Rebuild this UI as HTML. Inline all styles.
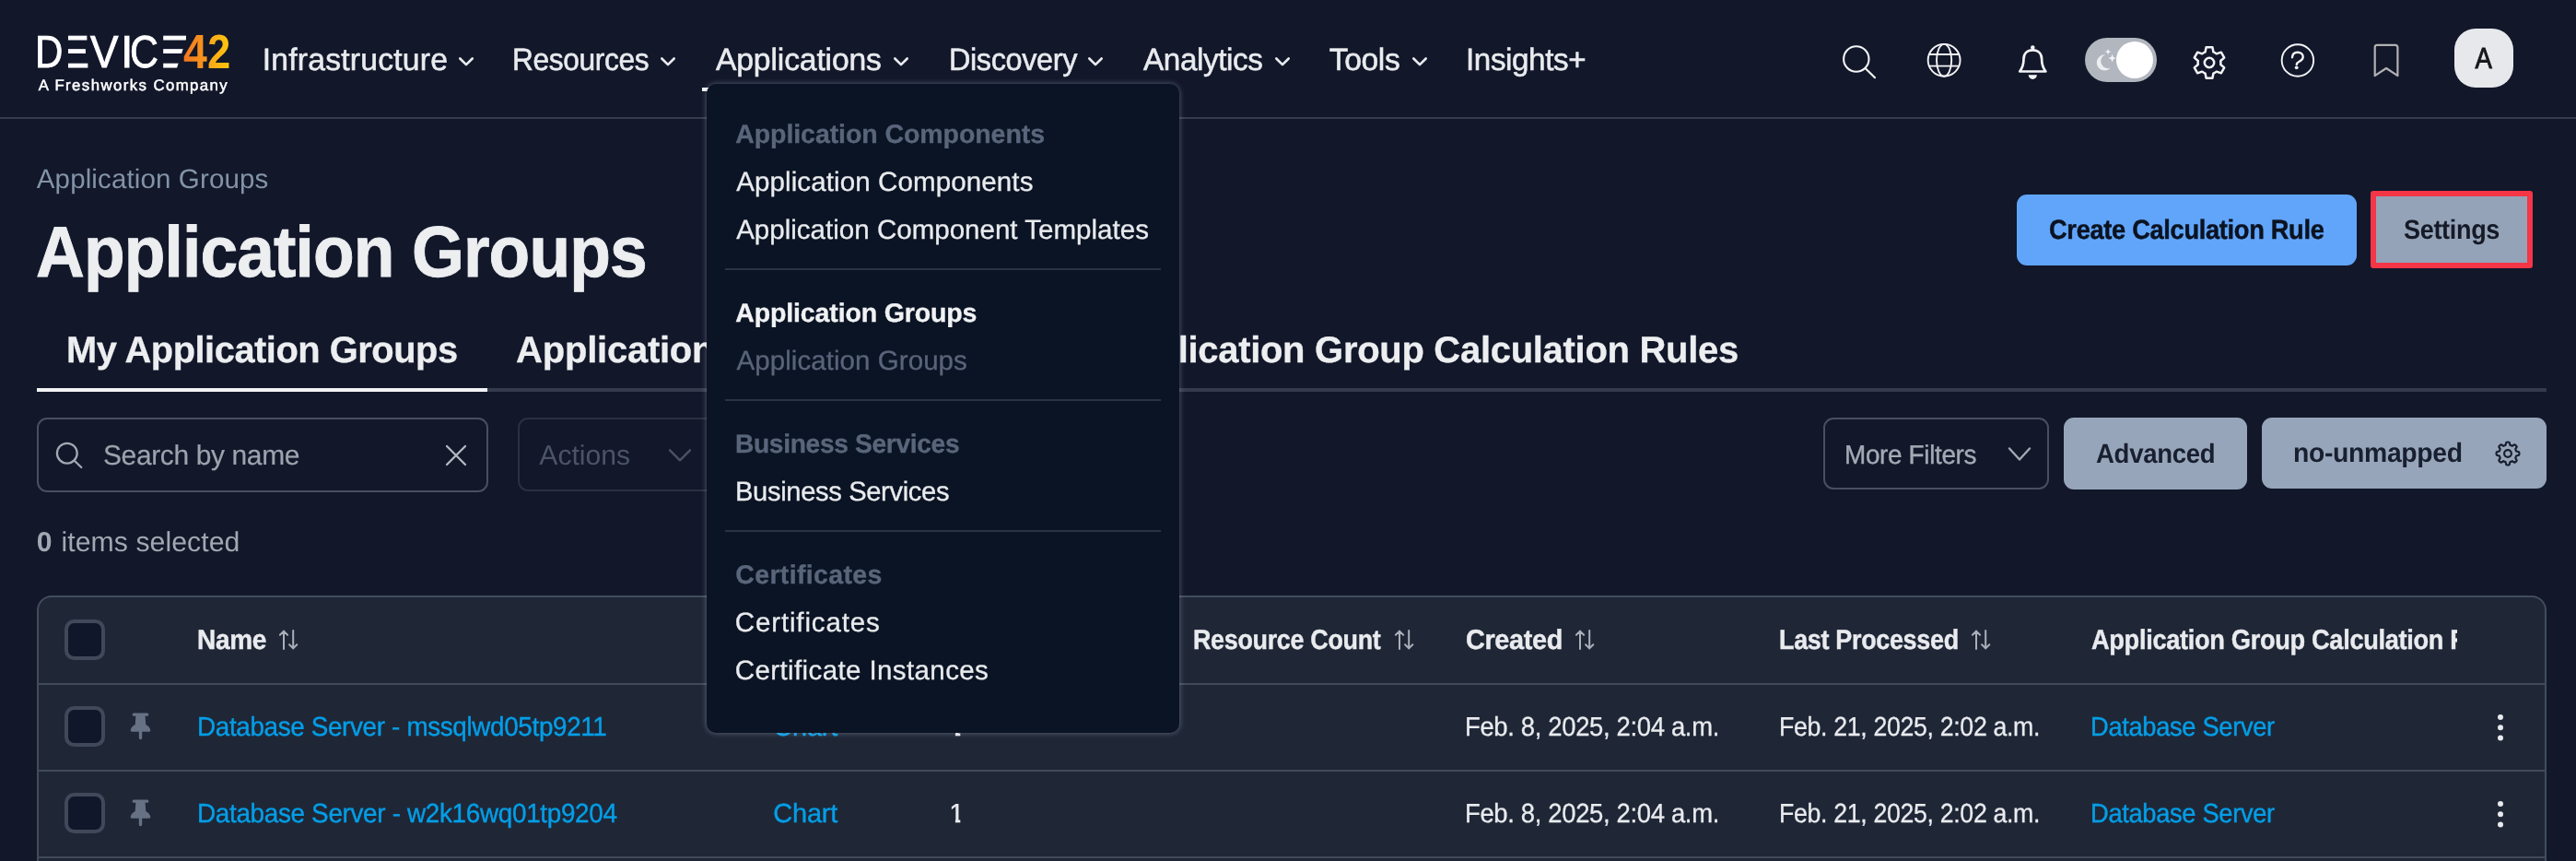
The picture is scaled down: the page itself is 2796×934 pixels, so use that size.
<!DOCTYPE html>
<html lang="en">
<head>
<meta charset="utf-8">
<title>Application Groups - Device42</title>
<style>
html,body{margin:0;padding:0;background:#12172a;}
body{width:2796px;height:934px;overflow:hidden;font-family:"Liberation Sans",sans-serif;}
#app{position:relative;width:2796px;height:934px;overflow:hidden;will-change:transform;text-rendering:geometricPrecision;}
.t{position:absolute;white-space:nowrap;margin:0;padding:0;font-weight:400;font-family:"Liberation Sans",sans-serif;transform-origin:0 0;}
h1.t{font-weight:700;}
.abs{position:absolute;}
.lg{position:absolute;display:block;transform-origin:0 0;color:#fff;-webkit-text-stroke:0.85px #fff;white-space:nowrap;}
.lg.e{-webkit-text-stroke:1.15px #fff;}
.lg.g4{background:linear-gradient(90deg,#f37521,#f89a1c);-webkit-background-clip:text;background-clip:text;color:transparent;-webkit-text-stroke:0;}
.lg.g2{background:linear-gradient(90deg,#f8a41b,#fdc80c);-webkit-background-clip:text;background-clip:text;color:transparent;-webkit-text-stroke:0;}
svg{position:absolute;overflow:visible;}
header{position:absolute;left:0;top:0;width:2796px;height:127px;border-bottom:2px solid #353c4c;box-sizing:content-box;}
.chev{fill:none;stroke:#e9ebee;stroke-width:2.6;stroke-linecap:round;stroke-linejoin:round;}
.ic{fill:none;stroke-linecap:round;stroke-linejoin:round;}
#dropdown{position:absolute;left:767px;top:91px;width:513px;height:703.5px;box-sizing:border-box;background:#0b1424;border-radius:10px;box-shadow:0 0 6px rgba(190,198,215,.42);}
.ddiv{position:absolute;left:787px;width:473px;height:2px;background:#2a3343;}
.box{position:absolute;box-sizing:border-box;border-radius:10px;}
.cb{position:absolute;box-sizing:border-box;width:44px;height:44px;border:4px solid #404959;border-radius:10.5px;background:#11172a;}
#table{position:absolute;left:40px;top:646px;width:2724px;height:320px;box-sizing:border-box;background:#1f2737;border:2px solid #424c5b;border-radius:16px 16px 0 0;}
.rowline{position:absolute;left:41px;width:2722px;height:2px;background:#404a59;}
</style>
</head>
<body>
<div id="app">

<!-- ================= HEADER ================= -->
<header>
  <a id="logo" class="abs" style="left:0;top:0;"><span class="lg" style="left:37.62px;top:33.04px;font-size:49.1px;line-height:49.1px;transform:scaleX(0.8556);">D</span><span class="lg e" style="left:63.92px;top:33.04px;font-size:49.1px;line-height:49.1px;transform:scaleX(1.0030);clip-path:polygon(9.95px 0,100% 0,100% 100%,9.95px 100%);">E</span><span class="lg" style="left:98.00px;top:33.04px;font-size:49.1px;line-height:49.1px;transform:scaleX(0.9306);">V</span><span class="lg" style="left:130.91px;top:33.04px;font-size:49.1px;line-height:49.1px;transform:scaleX(0.9869);">I</span><span class="lg" style="left:141.49px;top:33.04px;font-size:49.1px;line-height:49.1px;transform:scaleX(0.8743);">C</span><span class="lg e" style="left:165.31px;top:33.04px;font-size:49.1px;line-height:49.1px;transform:scaleX(1.2218);clip-path:polygon(9.95px 0,32.89px 0,19.85px 49.1px,9.95px 49.1px);">E</span><span class="lg g4" style="left:198.80px;top:30.71px;font-size:52.2px;line-height:52.2px;transform:scaleX(0.8923);font-weight:700;">4</span><span class="lg g2" style="left:225.08px;top:30.71px;font-size:52.2px;line-height:52.2px;transform:scaleX(0.8697);font-weight:700;">2</span></a>
  <span class="t" style="left:41.65px;top:84px;font-size:16.8px;line-height:17px;letter-spacing:1.42px;color:#ffffff;-webkit-text-stroke:0.5px #ffffff;">A Freshworks Company</span>

  <nav>
    <span class="t" style="left:284.64px;top:48px;font-size:33.7px;line-height:34px;letter-spacing:0.22px;color:#e9ebee;-webkit-text-stroke:0.55px #e9ebee;">Infrastructure</span><svg class="chev" style="left:497.9px;top:61.5px" width="16" height="10" viewBox="0 0 16 10"><path d="M1.3 1.5 8 8.2 14.7 1.5"/></svg>
    <span class="t" style="left:556.1px;top:48px;font-size:33.7px;line-height:34px;letter-spacing:-0.4px;transform:scaleX(0.9416);color:#e9ebee;-webkit-text-stroke:0.55px #e9ebee;">Resources</span><svg class="chev" style="left:717px;top:61.5px" width="16" height="10" viewBox="0 0 16 10"><path d="M1.3 1.5 8 8.2 14.7 1.5"/></svg>
    <span class="t" style="left:776.98px;top:48px;font-size:33.7px;line-height:34px;letter-spacing:-0.15px;color:#e9ebee;-webkit-text-stroke:0.55px #e9ebee;">Applications</span><svg class="chev" style="left:969.5px;top:61.5px" width="16" height="10" viewBox="0 0 16 10"><path d="M1.3 1.5 8 8.2 14.7 1.5"/></svg>
    <span class="t" style="left:1029.54px;top:48px;font-size:33.7px;line-height:34px;letter-spacing:-0.4px;transform:scaleX(0.9633);color:#e9ebee;-webkit-text-stroke:0.55px #e9ebee;">Discovery</span><svg class="chev" style="left:1181px;top:61.5px" width="16" height="10" viewBox="0 0 16 10"><path d="M1.3 1.5 8 8.2 14.7 1.5"/></svg>
    <span class="t" style="left:1241.28px;top:48px;font-size:33.7px;line-height:34px;letter-spacing:-0.4px;transform:scaleX(0.9869);color:#e9ebee;-webkit-text-stroke:0.55px #e9ebee;">Analytics</span><svg class="chev" style="left:1383.5px;top:61.5px" width="16" height="10" viewBox="0 0 16 10"><path d="M1.3 1.5 8 8.2 14.7 1.5"/></svg>
    <span class="t" style="left:1442.75px;top:48px;font-size:33.7px;line-height:34px;letter-spacing:-0.4px;color:#e9ebee;-webkit-text-stroke:0.55px #e9ebee;">Tools</span><svg class="chev" style="left:1532.5px;top:61.5px" width="16" height="10" viewBox="0 0 16 10"><path d="M1.3 1.5 8 8.2 14.7 1.5"/></svg>
    <span class="t" style="left:1590.98px;top:48px;font-size:33.7px;line-height:34px;letter-spacing:-0.4px;transform:scaleX(0.9848);color:#e9ebee;-webkit-text-stroke:0.55px #e9ebee;">Insights+</span>
    <div class="abs" id="nav-active" style="left:762px;top:95px;width:240px;height:4px;background:#f1f2f4;"></div>
  </nav>

  <div id="tools">
    <!-- search -->
    <svg class="ic" style="left:1995px;top:45px" width="44" height="44" viewBox="1995 45 44 44" stroke="#f3f4f6" stroke-width="2.1"><circle cx="2014.8" cy="64" r="13.7"/><path d="M2025 74.4 2035 84.2"/></svg>
    <!-- globe -->
    <svg class="ic" style="left:2089px;top:45px" width="42" height="42" viewBox="2089 45 42 42" stroke="#f3f4f6" stroke-width="1.9"><circle cx="2110.1" cy="65.3" r="17.45"/><ellipse cx="2110.1" cy="65.3" rx="8.1" ry="17.45"/><path d="M2094 59H2126.2M2094 71.6H2126.2"/></svg>
    <!-- bell -->
    <svg class="ic" style="left:2186px;top:45px" width="40" height="44" viewBox="2186 45 40 44" stroke="#f3f4f6" stroke-width="2.7"><path d="M2192.2 77.5C2194.7 74.3 2196.5 71.2 2196.5 64C2196.5 58 2200.5 54.3 2206.3 54.3C2212.1 54.3 2216.1 58 2216.1 64C2216.1 71.2 2217.9 74.3 2220.4 77.5Z"/><circle cx="2206.3" cy="51.6" r="1.3" fill="#f3f4f6" stroke-width="2"/><path d="M2201.7 81.3h9.2a4.6 4.6 0 0 1-9.2 0z" fill="#f3f4f6" stroke="none"/></svg>
    <!-- theme toggle -->
    <div class="abs" id="toggle" style="left:2263px;top:40.5px;width:78px;height:48.5px;border-radius:24.5px;background:#b2b6be;">
      <svg style="left:7px;top:9px" width="32" height="32" viewBox="0 0 32 32"><path d="M15.2 9.3a8.6 8.6 0 1 0 5.6 14.3 7 7 0 0 1-5.6-14.300000000000001z" fill="#eceef1"/><path d="M18.1 2.9l.9 2.3 2.3.9-2.3.9-.9 2.3-.9-2.3-2.3-.9 2.3-.9zM22.6 8.8l1.2 3.100000000000001 3.100000000000001 1.2-3.100000000000001 1.2-1.2 3.100000000000001-1.2-3.100000000000001-3.100000000000001-1.2 3.100000000000001-1.2z" fill="#f4f5f7"/></svg>
      <div class="abs" style="left:33.8px;top:4px;width:40.4px;height:40.4px;border-radius:50%;background:#ffffff;"></div>
    </div>
    <!-- settings gear -->
    <svg class="ic" style="left:2377.3px;top:46.5px" width="42" height="42" viewBox="-21 -21 42 42" stroke="#f3f4f6" stroke-width="2.5" id="gear"><circle cx="0" cy="0" r="5.2"/><path d="M4.44 -11.58L3.41 -16.76L-3.41 -16.76L-4.44 -11.58A12.4 12.4 0 0 0 -7.80 -9.64L-12.81 -11.33L-16.22 -5.43L-12.25 -1.94A12.4 12.4 0 0 0 -12.25 1.94L-16.22 5.43L-12.81 11.33L-7.80 9.64A12.4 12.4 0 0 0 -4.44 11.58L-3.41 16.76L3.41 16.76L4.44 11.58A12.4 12.4 0 0 0 7.80 9.64L12.81 11.33L16.22 5.43L12.25 1.94A12.4 12.4 0 0 0 12.25 -1.94L16.22 -5.43L12.81 -11.33L7.80 -9.64A12.4 12.4 0 0 0 4.44 -11.58Z"/></svg>
    <!-- help -->
    <svg class="ic" style="left:2473px;top:45px" width="42" height="42" viewBox="2473 45 42 42" stroke="#f3f4f6" stroke-width="1.9"><circle cx="2493.9" cy="65.5" r="17.25"/><path d="M2488 62.2c.2-3.300000000000001 2.6-5.4 5.9-5.4 3.4 0 5.8 2.1 5.8 4.9 0 2.3-1.4 3.4-3.2 4.5-2.2 1.3-3.7 2-3.7 3.7" stroke-width="2.4"/><circle cx="2492.7" cy="73.3" r="1.9" fill="#f3f4f6" stroke="none"/></svg>
    <!-- bookmark -->
    <svg class="ic" style="left:2573px;top:45px" width="34" height="42" viewBox="2573 45 34 42" stroke="#b1b1b3" stroke-width="2.2"><path d="M2577.7 82.2V51.3a2.4 2.4 0 0 1 2.4-2.4h19.9a2.4 2.4 0 0 1 2.4 2.4v30.9l-12.35-8.2z"/></svg>
    <!-- avatar -->
    <div class="abs" id="avatar" style="left:2664px;top:31px;width:64px;height:64px;border-radius:23px;background:#e6e8eb;"></div>
    <span class="t" style="left:2685.05px;top:47px;font-size:32px;line-height:32px;color:#17171b;-webkit-text-stroke:0.9px #17171b;transform:scaleX(.86);transform-origin:50% 50%;">A</span>
  </div>
</header>

<!-- ================= PAGE ================= -->
<main>
  <span class="t" style="left:39.8px;top:180px;font-size:29.5px;line-height:30px;letter-spacing:0.13px;color:#8393a7;">Application Groups</span>
  <h1 class="t" style="left:39.31px;top:234px;font-size:78px;line-height:78px;font-weight:700;letter-spacing:-0.94px;transform:scaleX(0.9378);color:#eceef0;-webkit-text-stroke:0.9px #eceef0;">Application Groups</h1>
  <div class="box" id="btn-create" style="left:2189px;top:211px;width:369px;height:77px;background:#60a5fa;border-radius:11px;"></div>
  <span class="t" style="left:2224.17px;top:235px;font-size:29.5px;line-height:30px;font-weight:700;letter-spacing:-0.35px;transform:scaleX(0.9240);color:#0b1220;-webkit-text-stroke:0.45px #0b1220;">Create Calculation Rule</span>
  <div class="box" id="btn-settings" style="left:2573px;top:207px;width:176px;height:84px;background:#94a3b8;border:6px solid #f43646;border-radius:3px;"></div>
  <span class="t" style="left:2609.38px;top:235px;font-size:29.5px;line-height:30px;font-weight:700;letter-spacing:-0.35px;transform:scaleX(0.9159);color:#151a26;">Settings</span>

  <!-- tabs -->
  <div class="abs" style="left:40px;top:421px;width:2724px;height:4px;background:#343b4c;"></div>
  <div class="abs" style="left:40px;top:421px;width:489px;height:4px;background:#f1f2f4;"></div>
  <span class="t" style="left:71.66px;top:360px;font-size:40px;line-height:40px;font-weight:700;letter-spacing:-0.48px;transform:scaleX(0.9961);color:#eceef0;-webkit-text-stroke:0.3px #eceef0;">My Application Groups</span><span class="t" style="left:560.12px;top:360px;font-size:40px;line-height:40px;font-weight:700;letter-spacing:-0.24px;color:#eceef0;-webkit-text-stroke:0.3px #eceef0;">Application Group Templates</span><span class="t" style="left:1201.79px;top:360px;font-size:40px;line-height:40px;font-weight:700;letter-spacing:-0.3px;color:#eceef0;-webkit-text-stroke:0.3px #eceef0;">Application Group Calculation Rules</span>

  <!-- filters -->
  <div class="box" id="search" style="left:40px;top:453px;width:490px;height:81px;border:2px solid #48505f;border-radius:11px;"></div>
  <svg class="ic" style="left:58px;top:478px" width="34" height="34" viewBox="58 478 34 34" stroke="#a3a8b3" stroke-width="2.3"><circle cx="72.8" cy="491.7" r="10.9"/><path d="M80.8 499.7 88.3 507"/></svg>
  <span class="t" style="left:112.06px;top:479px;font-size:30.2px;line-height:31px;letter-spacing:-0.36px;transform:scaleX(0.9919);color:#9da2ad;-webkit-text-stroke:0.2px #9da2ad;">Search by name</span>
  <svg class="ic" style="left:482px;top:481px" width="26" height="26" viewBox="482 481 26 26" stroke="#b5b9c1" stroke-width="2.3"><path d="M485 484 505 504M505 484 485 504"/></svg>
  <div class="box" id="actions" style="left:562px;top:453px;width:260px;height:79.5px;border:2px solid #29313f;border-radius:11px;"></div>
  <span class="t" style="left:585.3px;top:479px;font-size:30.2px;line-height:31px;letter-spacing:-0.05px;color:#4b5466;">Actions</span>
  <svg class="ic" style="left:724px;top:485px" width="28" height="18" viewBox="724 485 28 18" stroke="#4a5364" stroke-width="2.4"><path d="M727 488.3 738 499.3 749 488.3"/></svg>

  <div class="box" id="morefilters" style="left:1979px;top:453px;width:245px;height:78px;border:2px solid #48505f;border-radius:11px;"></div>
  <span class="t" style="left:2001.82px;top:480px;font-size:28.8px;line-height:29px;letter-spacing:-0.35px;transform:scaleX(0.9685);color:#a4a9b4;-webkit-text-stroke:0.4px #a4a9b4;">More Filters</span>
  <svg class="ic" style="left:2178px;top:483px" width="28" height="18" viewBox="2178 483 28 18" stroke="#a3a8b3" stroke-width="2.4"><path d="M2181 486.5 2192 498.5 2203 486.5"/></svg>
  <div class="box" id="advanced" style="left:2240px;top:453px;width:199px;height:78px;background:#97a5ba;border-radius:11px;"></div>
  <span class="t" style="left:2275.07px;top:478px;font-size:29.3px;line-height:30px;font-weight:700;letter-spacing:-0.35px;transform:scaleX(0.9428);color:#182030;">Advanced</span>
  <div class="box" id="nounmapped" style="left:2455px;top:452.7px;width:309px;height:77.4px;background:#97a5ba;border-radius:11px;"></div>
  <span class="t" style="left:2489.03px;top:477px;font-size:29.3px;line-height:30px;font-weight:700;letter-spacing:-0.35px;transform:scaleX(0.9680);color:#182030;">no-unmapped</span>
  <svg class="ic" style="left:2704.8px;top:474.9px" width="34" height="34" viewBox="-17 -17 34 34" stroke="#182030" stroke-width="2.2"><circle cx="0" cy="0" r="3.9"/><path d="M2.46 -9.18L1.70 -12.08Q0.00 -12.93 -1.70 -12.08L-2.46 -9.18A9.5 9.5 0 0 0 -4.75 -8.23L-7.34 -9.74Q-9.14 -9.14 -9.74 -7.34L-8.23 -4.75A9.5 9.5 0 0 0 -9.18 -2.46L-12.08 -1.70Q-12.93 -0.00 -12.08 1.70L-9.18 2.46A9.5 9.5 0 0 0 -8.23 4.75L-9.74 7.34Q-9.14 9.14 -7.34 9.74L-4.75 8.23A9.5 9.5 0 0 0 -2.46 9.18L-1.70 12.08Q-0.00 12.93 1.70 12.08L2.46 9.18A9.5 9.5 0 0 0 4.75 8.23L7.34 9.74Q9.14 9.14 9.74 7.34L8.23 4.75A9.5 9.5 0 0 0 9.18 2.46L12.08 1.70Q12.93 0.00 12.08 -1.70L9.18 -2.46A9.5 9.5 0 0 0 8.23 -4.75L9.74 -7.34Q9.14 -9.14 7.34 -9.74L4.75 -8.23A9.5 9.5 0 0 0 2.46 -9.18Z"/></svg>

  <span class="t" style="left:39.76px;top:573px;font-size:30.2px;line-height:31px;font-weight:700;color:#a2a7b1;">0</span><span class="t" style="left:66.51px;top:573px;font-size:30.2px;line-height:31px;letter-spacing:0.07px;color:#a2a7b1;">items selected</span>

  <!-- table -->
  <div id="table"></div>
  <div class="rowline" style="top:741px"></div>
  <div class="rowline" style="top:835px"></div>
  <div class="rowline" style="top:929px"></div>
  <div class="cb" style="left:70px;top:672px"></div>
  <span class="t" style="left:213.85px;top:680px;font-size:30px;line-height:30px;font-weight:700;letter-spacing:-0.36px;transform:scaleX(0.9358);color:#e9ebee;-webkit-text-stroke:0.4px #e9ebee;">Name</span>
  <svg class="ic sort" style="left:302px;top:683px" width="22" height="22" viewBox="302 683 22 22" stroke="#aab0ba" stroke-width="2"><path d="M308 704V684.6M303.9 688.7 308 684.6 312.1 688.7M318.2 684V703.4M314.1 699.3 318.2 703.4 322.3 699.3"/></svg>
  <span class="t" style="left:1295.22px;top:680px;font-size:30px;line-height:30px;font-weight:700;letter-spacing:-0.36px;transform:scaleX(0.8974);color:#e9ebee;-webkit-text-stroke:0.4px #e9ebee;">Resource Count</span>
  <svg class="ic sort" style="left:1512.6px;top:683px" width="22" height="22" viewBox="302 683 22 22" stroke="#aab0ba" stroke-width="2"><path d="M308 704V684.6M303.9 688.7 308 684.6 312.1 688.7M318.2 684V703.4M314.1 699.3 318.2 703.4 322.3 699.3"/></svg>
  <span class="t" style="left:1591.3px;top:680px;font-size:30px;line-height:30px;font-weight:700;letter-spacing:-0.36px;transform:scaleX(0.9616);color:#e9ebee;-webkit-text-stroke:0.4px #e9ebee;">Created</span>
  <svg class="ic sort" style="left:1709.4px;top:683px" width="22" height="22" viewBox="302 683 22 22" stroke="#aab0ba" stroke-width="2"><path d="M308 704V684.6M303.9 688.7 308 684.6 312.1 688.7M318.2 684V703.4M314.1 699.3 318.2 703.4 322.3 699.3"/></svg>
  <span class="t" style="left:1931.21px;top:680px;font-size:30px;line-height:30px;font-weight:700;letter-spacing:-0.36px;transform:scaleX(0.8987);color:#e9ebee;-webkit-text-stroke:0.4px #e9ebee;">Last Processed</span>
  <svg class="ic sort" style="left:2138.6px;top:683px" width="22" height="22" viewBox="302 683 22 22" stroke="#aab0ba" stroke-width="2"><path d="M308 704V684.6M303.9 688.7 308 684.6 312.1 688.7M318.2 684V703.4M314.1 699.3 318.2 703.4 322.3 699.3"/></svg>
  <div class="abs" style="left:2260px;top:670px;width:407px;height:50px;overflow:hidden;"><div class="abs" style="left:-2260px;top:-670px;"><span class="t" style="left:2270.47px;top:680px;font-size:30px;line-height:30px;font-weight:700;letter-spacing:-0.36px;transform:scaleX(0.9071);color:#e9ebee;-webkit-text-stroke:0.4px #e9ebee;">Application Group Calculation Rule</span></div></div>

  <!-- row 1 -->
  <div class="cb" style="left:70px;top:766px"></div>
  <svg style="left:141px;top:772.5px" width="23" height="30" viewBox="0 0 23 30"><path d="M4.2 0.6h14.6a1.5 1.5 0 0 1 0 3.1h-2.2l.7 9.3c2.7 1.4 4.5 3.5 5 6.100000000000001.15.9-.5 1.6-1.4 1.6H2.100000000000001c-.9 0-1.55-.7-1.4-1.6.5-2.6 2.3-4.7 5-6.100000000000001l.7-9.3H4.2a1.5 1.5 0 0 1 0-3.1zM9.8 20.7h3.4v6.8a1.7 1.7 0 0 1-3.4 0z" fill="#667183"/></svg>
  <span class="t" style="left:213.53px;top:775px;font-size:29px;line-height:29px;letter-spacing:-0.35px;transform:scaleX(0.9591);color:#049ee7;-webkit-text-stroke:0.4px #049ee7;">Database Server - mssqlwd05tp9211</span><span class="t" style="left:839.34px;top:775px;font-size:29px;line-height:29px;letter-spacing:-0.24px;color:#049ee7;-webkit-text-stroke:0.4px #049ee7;">Chart</span><span class="t" style="left:1030.34px;top:775px;font-size:29px;line-height:29px;color:#e9ebee;-webkit-text-stroke:0.3px #e9ebee;clip-path:polygon(0 0,100% 0,100% 19.23px,11.96px 19.23px,11.96px 100%,6.60px 100%,6.60px 19.23px,0 19.23px);">1</span><span class="t" style="left:1590.01px;top:775px;font-size:29px;line-height:29px;letter-spacing:-0.35px;transform:scaleX(0.9457);color:#e9ebee;-webkit-text-stroke:0.3px #e9ebee;">Feb. 8, 2025, 2:04 a.m.</span><span class="t" style="left:1930.76px;top:775px;font-size:29px;line-height:29px;letter-spacing:-0.35px;transform:scaleX(0.9205);color:#e9ebee;-webkit-text-stroke:0.3px #e9ebee;">Feb. 21, 2025, 2:02 a.m.</span><span class="t" style="left:2268.77px;top:775px;font-size:29px;line-height:29px;letter-spacing:-0.35px;transform:scaleX(0.9409);color:#049ee7;-webkit-text-stroke:0.4px #049ee7;">Database Server</span>
  <svg style="left:2708px;top:773.5px" width="12" height="31" viewBox="0 0 12 31"><circle cx="6" cy="4" r="3" fill="#e8eaed"/><circle cx="6" cy="15.2" r="3" fill="#e8eaed"/><circle cx="6" cy="26.5" r="3" fill="#e8eaed"/></svg>

  <!-- row 2 -->
  <div class="cb" style="left:70px;top:860px"></div>
  <svg style="left:141px;top:866.5px" width="23" height="30" viewBox="0 0 23 30"><path d="M4.2 0.6h14.6a1.5 1.5 0 0 1 0 3.1h-2.2l.7 9.3c2.7 1.4 4.5 3.5 5 6.100000000000001.15.9-.5 1.6-1.4 1.6H2.100000000000001c-.9 0-1.55-.7-1.4-1.6.5-2.6 2.3-4.7 5-6.100000000000001l.7-9.3H4.2a1.5 1.5 0 0 1 0-3.1zM9.8 20.7h3.4v6.8a1.7 1.7 0 0 1-3.4 0z" fill="#667183"/></svg>
  <span class="t" style="left:213.52px;top:869px;font-size:29px;line-height:29px;letter-spacing:-0.35px;transform:scaleX(0.9618);color:#049ee7;-webkit-text-stroke:0.4px #049ee7;">Database Server - w2k16wq01tp9204</span><span class="t" style="left:839.34px;top:869px;font-size:29px;line-height:29px;letter-spacing:-0.24px;color:#049ee7;-webkit-text-stroke:0.4px #049ee7;">Chart</span><span class="t" style="left:1030.34px;top:869px;font-size:29px;line-height:29px;color:#e9ebee;-webkit-text-stroke:0.3px #e9ebee;clip-path:polygon(0 0,100% 0,100% 19.23px,11.96px 19.23px,11.96px 100%,6.60px 100%,6.60px 19.23px,0 19.23px);">1</span><span class="t" style="left:1590.01px;top:869px;font-size:29px;line-height:29px;letter-spacing:-0.35px;transform:scaleX(0.9457);color:#e9ebee;-webkit-text-stroke:0.3px #e9ebee;">Feb. 8, 2025, 2:04 a.m.</span><span class="t" style="left:1930.76px;top:869px;font-size:29px;line-height:29px;letter-spacing:-0.35px;transform:scaleX(0.9205);color:#e9ebee;-webkit-text-stroke:0.3px #e9ebee;">Feb. 21, 2025, 2:02 a.m.</span><span class="t" style="left:2268.77px;top:869px;font-size:29px;line-height:29px;letter-spacing:-0.35px;transform:scaleX(0.9409);color:#049ee7;-webkit-text-stroke:0.4px #049ee7;">Database Server</span>
  <svg style="left:2708px;top:867.5px" width="12" height="31" viewBox="0 0 12 31"><circle cx="6" cy="4" r="3" fill="#e8eaed"/><circle cx="6" cy="15.2" r="3" fill="#e8eaed"/><circle cx="6" cy="26.5" r="3" fill="#e8eaed"/></svg>
</main>

<!-- ================= APPLICATIONS DROPDOWN ================= -->
<div id="dropdown"></div>
<div id="dropdown-items">
  <span class="t" style="left:798.23px;top:132px;font-size:28.5px;line-height:29px;font-weight:700;letter-spacing:-0.07px;color:#59657a;-webkit-text-stroke:0.35px #59657a;">Application Components</span><span class="t" style="left:799.15px;top:183px;font-size:29.5px;line-height:30px;letter-spacing:0.12px;color:#e9ebee;-webkit-text-stroke:0.3px #e9ebee;">Application Components</span><span class="t" style="left:799.15px;top:235px;font-size:29.5px;line-height:30px;letter-spacing:0.02px;color:#e9ebee;-webkit-text-stroke:0.3px #e9ebee;">Application Component Templates</span>
  <div class="ddiv" style="top:291px"></div>
  <span class="t" style="left:798.33px;top:326px;font-size:28.5px;line-height:29px;font-weight:700;letter-spacing:-0.14px;color:#f1f2f4;-webkit-text-stroke:0.35px #f1f2f4;">Application Groups</span><span class="t" style="left:799.55px;top:377px;font-size:29.5px;line-height:30px;letter-spacing:0.06px;color:#59647a;-webkit-text-stroke:0.3px #59647a;">Application Groups</span>
  <div class="ddiv" style="top:433px"></div>
  <span class="t" style="left:798.41px;top:468px;font-size:28.5px;line-height:29px;font-weight:700;letter-spacing:-0.34px;transform:scaleX(0.9883);color:#59657a;-webkit-text-stroke:0.35px #59657a;">Business Services</span><span class="t" style="left:797.87px;top:519px;font-size:29.5px;line-height:30px;letter-spacing:-0.35px;transform:scaleX(0.9874);color:#e9ebee;-webkit-text-stroke:0.3px #e9ebee;">Business Services</span>
  <div class="ddiv" style="top:575px"></div>
  <span class="t" style="left:798.28px;top:610px;font-size:28.5px;line-height:29px;font-weight:700;letter-spacing:0.35px;color:#59657a;-webkit-text-stroke:0.35px #59657a;">Certificates</span><span class="t" style="left:797.77px;top:661px;font-size:29.5px;line-height:30px;letter-spacing:0.86px;color:#e9ebee;-webkit-text-stroke:0.3px #e9ebee;">Certificates</span><span class="t" style="left:797.77px;top:713px;font-size:29.5px;line-height:30px;letter-spacing:0.39px;color:#e9ebee;-webkit-text-stroke:0.3px #e9ebee;">Certificate Instances</span>
</div>

</div>
</body>
</html>
